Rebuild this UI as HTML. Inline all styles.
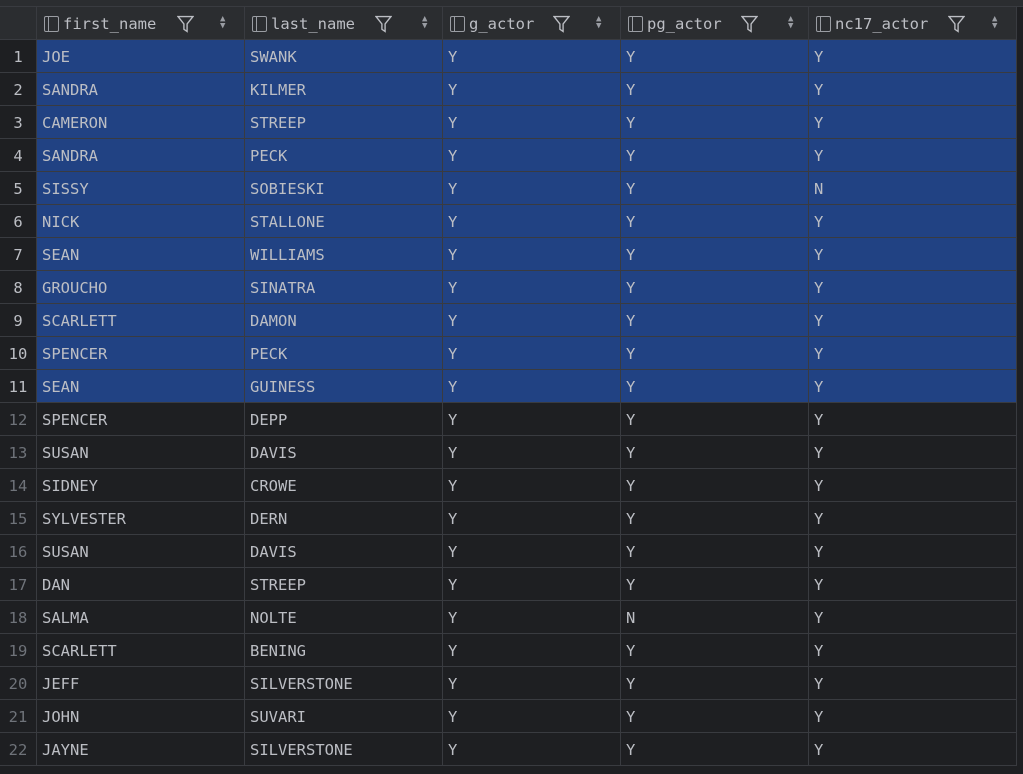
<!DOCTYPE html><html><head><style>
body{margin:0;width:1023px;height:774px;background:#1e1f22;overflow:hidden;font-family:"DejaVu Sans Mono","Liberation Mono",monospace;font-size:15.5px;color:#bcbec4}
.top{height:6px;background:#2b2d30;border-bottom:1px solid #393b40}
.r{display:flex;height:32px;border-bottom:1px solid #393b40;width:1017px}
.r div{box-sizing:border-box;border-right:1px solid #393b40;line-height:31px;padding-top:2px;padding-left:5px;white-space:nowrap;overflow:hidden}
.r div:nth-child(1){width:37px;padding-left:0;text-align:center;color:#6f737a;background:#1e1f22}
.r div:nth-child(2){width:208px}.r div:nth-child(3){width:198px}.r div:nth-child(4){width:178px}.r div:nth-child(5){width:188px}.r div:nth-child(6){width:208px}
.s{background:#214283}.s div:nth-child(1){color:#bcbec4}
.h{background:#2b2d30;height:32px}
.h div{display:flex;align-items:center;line-height:32px;padding-top:1px;padding-left:7px;position:relative}
.h div:nth-child(1){background:#2b2d30}
.ic{width:15px;height:16px;border:1.5px solid #9a9da3;border-radius:2px;box-sizing:border-box;margin-right:4px;position:relative}
.ic:after{content:"";position:absolute;left:3px;top:0;bottom:0;border-left:1.5px solid #9a9da3}
.f{position:absolute;top:8px}
.so{position:absolute;top:9px;font-size:9px;color:#9a9da3;line-height:7px}
</style></head><body>
<div class="top"></div>
<div class="r h"><div></div>
<div><span class="ic"></span>first_name<svg class="f" style="left:140px" width="17" height="18" viewBox="0 0 16 17"><path d="M1 1.5H15L9.5 8.5V15.5L6.5 13.5V8.5Z" fill="none" stroke="#bcbec4" stroke-width="1.3"/></svg><span class="so" style="left:183px">▲<br>▼</span></div>
<div><span class="ic"></span>last_name<svg class="f" style="left:130px" width="17" height="18" viewBox="0 0 16 17"><path d="M1 1.5H15L9.5 8.5V15.5L6.5 13.5V8.5Z" fill="none" stroke="#bcbec4" stroke-width="1.3"/></svg><span class="so" style="left:177px">▲<br>▼</span></div>
<div><span class="ic"></span>g_actor<svg class="f" style="left:110px" width="17" height="18" viewBox="0 0 16 17"><path d="M1 1.5H15L9.5 8.5V15.5L6.5 13.5V8.5Z" fill="none" stroke="#bcbec4" stroke-width="1.3"/></svg><span class="so" style="left:153px">▲<br>▼</span></div>
<div><span class="ic"></span>pg_actor<svg class="f" style="left:120px" width="17" height="18" viewBox="0 0 16 17"><path d="M1 1.5H15L9.5 8.5V15.5L6.5 13.5V8.5Z" fill="none" stroke="#bcbec4" stroke-width="1.3"/></svg><span class="so" style="left:167px">▲<br>▼</span></div>
<div><span class="ic"></span>nc17_actor<svg class="f" style="left:139px" width="17" height="18" viewBox="0 0 16 17"><path d="M1 1.5H15L9.5 8.5V15.5L6.5 13.5V8.5Z" fill="none" stroke="#bcbec4" stroke-width="1.3"/></svg><span class="so" style="left:183px">▲<br>▼</span></div>
</div>
<div class="r s"><div>1</div><div>JOE</div><div>SWANK</div><div>Y</div><div>Y</div><div>Y</div></div>
<div class="r s"><div>2</div><div>SANDRA</div><div>KILMER</div><div>Y</div><div>Y</div><div>Y</div></div>
<div class="r s"><div>3</div><div>CAMERON</div><div>STREEP</div><div>Y</div><div>Y</div><div>Y</div></div>
<div class="r s"><div>4</div><div>SANDRA</div><div>PECK</div><div>Y</div><div>Y</div><div>Y</div></div>
<div class="r s"><div>5</div><div>SISSY</div><div>SOBIESKI</div><div>Y</div><div>Y</div><div>N</div></div>
<div class="r s"><div>6</div><div>NICK</div><div>STALLONE</div><div>Y</div><div>Y</div><div>Y</div></div>
<div class="r s"><div>7</div><div>SEAN</div><div>WILLIAMS</div><div>Y</div><div>Y</div><div>Y</div></div>
<div class="r s"><div>8</div><div>GROUCHO</div><div>SINATRA</div><div>Y</div><div>Y</div><div>Y</div></div>
<div class="r s"><div>9</div><div>SCARLETT</div><div>DAMON</div><div>Y</div><div>Y</div><div>Y</div></div>
<div class="r s"><div>10</div><div>SPENCER</div><div>PECK</div><div>Y</div><div>Y</div><div>Y</div></div>
<div class="r s"><div>11</div><div>SEAN</div><div>GUINESS</div><div>Y</div><div>Y</div><div>Y</div></div>
<div class="r"><div>12</div><div>SPENCER</div><div>DEPP</div><div>Y</div><div>Y</div><div>Y</div></div>
<div class="r"><div>13</div><div>SUSAN</div><div>DAVIS</div><div>Y</div><div>Y</div><div>Y</div></div>
<div class="r"><div>14</div><div>SIDNEY</div><div>CROWE</div><div>Y</div><div>Y</div><div>Y</div></div>
<div class="r"><div>15</div><div>SYLVESTER</div><div>DERN</div><div>Y</div><div>Y</div><div>Y</div></div>
<div class="r"><div>16</div><div>SUSAN</div><div>DAVIS</div><div>Y</div><div>Y</div><div>Y</div></div>
<div class="r"><div>17</div><div>DAN</div><div>STREEP</div><div>Y</div><div>Y</div><div>Y</div></div>
<div class="r"><div>18</div><div>SALMA</div><div>NOLTE</div><div>Y</div><div>N</div><div>Y</div></div>
<div class="r"><div>19</div><div>SCARLETT</div><div>BENING</div><div>Y</div><div>Y</div><div>Y</div></div>
<div class="r"><div>20</div><div>JEFF</div><div>SILVERSTONE</div><div>Y</div><div>Y</div><div>Y</div></div>
<div class="r"><div>21</div><div>JOHN</div><div>SUVARI</div><div>Y</div><div>Y</div><div>Y</div></div>
<div class="r"><div>22</div><div>JAYNE</div><div>SILVERSTONE</div><div>Y</div><div>Y</div><div>Y</div></div>
</body></html>
